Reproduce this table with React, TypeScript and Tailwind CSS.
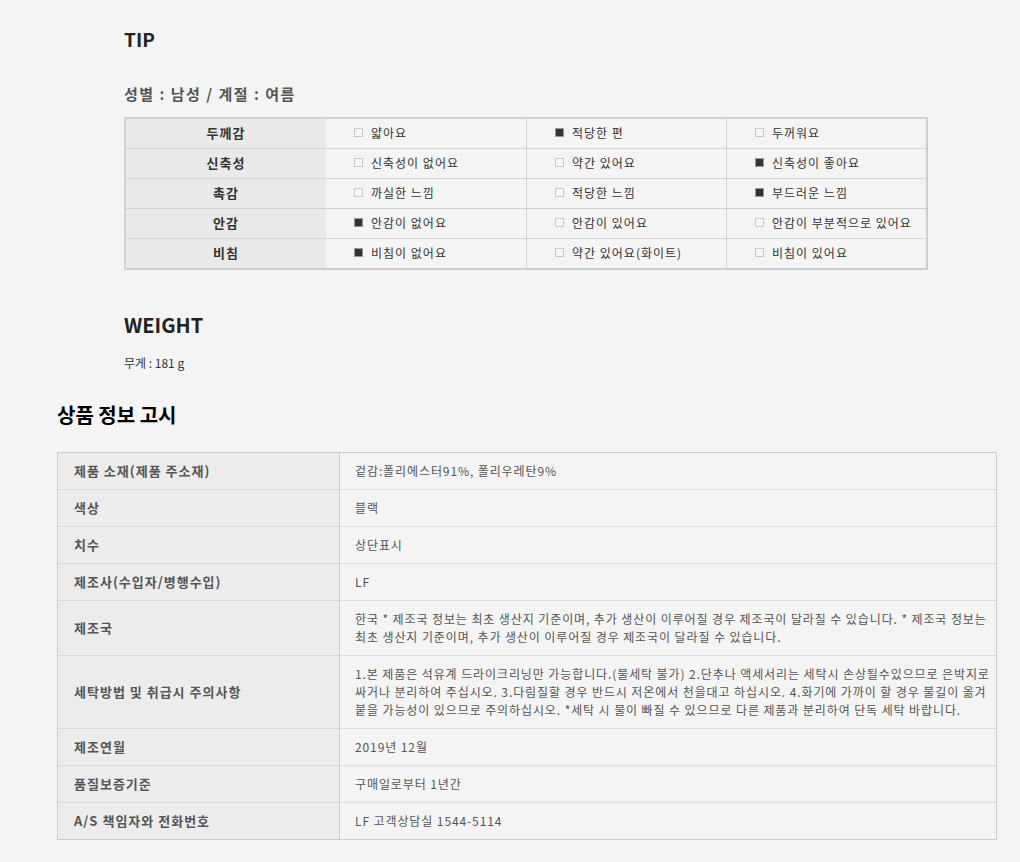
import React from 'react';

type TipRow = { label: string; options: string[]; checked: number };

const tipRows: TipRow[] = [
  { label: '두께감', options: ['얇아요', '적당한 편', '두꺼워요'], checked: 1 },
  { label: '신축성', options: ['신축성이 없어요', '약간 있어요', '신축성이 좋아요'], checked: 2 },
  { label: '촉감', options: ['까실한 느낌', '적당한 느낌', '부드러운 느낌'], checked: 2 },
  { label: '안감', options: ['안감이 없어요', '안감이 있어요', '안감이 부분적으로 있어요'], checked: 0 },
  { label: '비침', options: ['비침이 없어요', '약간 있어요(화이트)', '비침이 있어요'], checked: 0 },
];

const infoRows: [string, string][] = [
  ['제품 소재(제품 주소재)', '겉감:폴리에스터91%, 폴리우레탄9%'],
  ['색상', '블랙'],
  ['치수', '상단표시'],
  ['제조사(수입자/병행수입)', 'LF'],
  [
    '제조국',
    '한국 * 제조국 정보는 최초 생산지 기준이며, 추가 생산이 이루어질 경우 제조국이 달라질 수 있습니다. * 제조국 정보는 최초 생산지 기준이며, 추가 생산이 이루어질 경우 제조국이 달라질 수 있습니다.',
  ],
  [
    '세탁방법 및 취급시 주의사항',
    '1.본 제품은 석유계 드라이크리닝만 가능합니다.(물세탁 불가) 2.단추나 액세서리는 세탁시 손상될수있으므로 은박지로 싸거나 분리하여 주십시오. 3.다림질할 경우 반드시 저온에서 천을대고 하십시오. 4.화기에 가까이 할 경우 불길이 옮겨 붙을 가능성이 있으므로 주의하십시오. *세탁 시 물이 빠질 수 있으므로 다른 제품과 분리하여 단독 세탁 바랍니다.',
  ],
  ['제조연월', '2019년 12월'],
  ['품질보증기준', '구매일로부터 1년간'],
  ['A/S 책임자와 전화번호', 'LF 고객상담실 1544-5114'],
];

const CheckBox: React.FC<{ on: boolean }> = ({ on }) => (
  <span
    className={
      on
        ? 'inline-block w-[9px] h-[9px] border border-[#999] bg-[#333] shrink-0'
        : 'inline-block w-[9px] h-[9px] border border-[#c8c8c8] bg-[#f7f7f7] shrink-0'
    }
  />
);

const App: React.FC = () => {
  return (
    <div className="min-h-screen bg-[#f4f4f4] font-['Noto_Sans_CJK_KR',sans-serif] pl-[57px] pt-[25px] pb-[22px]">
      {/* TIP */}
      <div className="pl-[67px] w-[871px]">
        <h2 className="text-[19px] leading-7 font-bold text-[#222]">TIP</h2>
        <p className="mt-[31px] text-[15px] leading-5 font-bold tracking-[1.5px] text-[#555]">
          성별 : 남성 / 계절 : 여름
        </p>

        <div className="mt-[13px] w-[804px] border-2 border-[#cdcdcd] border-t-[#d2d2d2] border-l-[#d2d2d2]">
          {tipRows.map((row, i) => (
            <div
              key={row.label}
              className={
                i === tipRows.length - 1
                  ? 'grid grid-cols-[200px_1fr_1fr_1fr] h-[29px]'
                  : 'grid grid-cols-[200px_1fr_1fr_1fr] h-[30px] border-b border-[#d2d2d2]'
              }
            >
              <div className="flex items-center justify-center pb-[2px] bg-[#e9e9e9] text-[13px] font-bold tracking-[1px] text-[#333]">
                {row.label}
              </div>
              {row.options.map((opt, j) => (
                <div
                  key={opt}
                  className={
                    j === 0
                      ? 'flex items-center gap-[8px] pl-[28px] pb-[2px] text-[12px] tracking-[1px] text-[#333]'
                      : 'flex items-center gap-[8px] pl-[28px] pb-[2px] text-[12px] tracking-[1px] text-[#333] border-l border-[#d2d2d2]'
                  }
                >
                  <CheckBox on={row.checked === j} />
                  <span>{opt}</span>
                </div>
              ))}
            </div>
          ))}
        </div>

        {/* WEIGHT */}
        <h2 className="mt-[41px] text-[20px] leading-7 font-bold text-[#222]">WEIGHT</h2>
        <p className="mt-[16px] text-[12px] leading-4 text-[#333]">무게 : 181 g</p>
      </div>

      {/* 상품 정보 고시 */}
      <h2 className="mt-[30px] text-[20px] leading-7 font-bold text-black">상품 정보 고시</h2>

      <div className="mt-[23px] w-[940px] border border-[#cccccc]">
        {infoRows.map(([label, value], i) => (
          <div
            key={label}
            className={
              i === infoRows.length - 1
                ? 'grid grid-cols-[281px_1fr]'
                : 'grid grid-cols-[281px_1fr] border-b border-[#d9d9d9]'
            }
          >
            <div className="flex items-center bg-[#ececec] pl-[16px] text-[13px] font-bold tracking-[1px] text-[#555]">
              {label}
            </div>
            <div className="border-l border-[#cccccc] pl-[15px] pt-[9px] pb-[9px] text-[12px] leading-[18px] tracking-[0.9px] break-keep text-[#555]">
              {value}
            </div>
          </div>
        ))}
      </div>
    </div>
  );
};

export default App;
